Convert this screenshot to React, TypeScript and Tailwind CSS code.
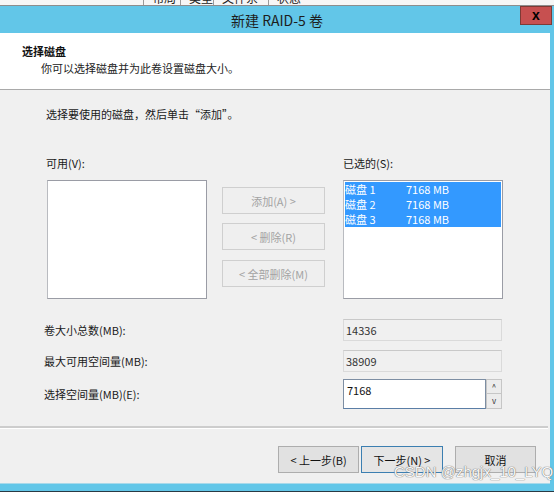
import React from 'react'

const font = "font-['Noto_Sans_CJK_SC','Noto_Sans',sans-serif]"

function ListBox({ children }: { children?: React.ReactNode }) {
  return (
    <div className="h-[119px] w-[160px] border border-[#9a9ca5] border-l-[#b9bbc0] bg-white p-px">
      {children}
    </div>
  )
}

function SideButton({ label }: { label: string }) {
  return (
    <div className="flex h-[27px] w-[103px] items-center justify-center border border-[#cfcfcf] bg-[#efefef] text-[11px] text-[#a3a3a3]">
      {label}
    </div>
  )
}

function ReadField({ value }: { value: string }) {
  return (
    <div className="flex h-[22px] w-[159px] items-center border border-[#dadada] border-t-[#c9c9c9] bg-[#f0f0f0] pl-[2px] text-[11px] text-[#333]">
      {value}
    </div>
  )
}

function FooterButton({
  label,
  focused,
}: {
  label: string
  focused?: boolean
}) {
  return (
    <div
      className={
        focused
          ? 'flex h-[27px] w-[82px] items-center justify-center border border-[#3c7fb1] bg-[#e5e5e5] text-[11px] text-[#111]'
          : 'flex h-[27px] w-[81px] items-center justify-center border border-[#adadad] bg-[#e1e1e1] text-[11px] text-[#111]'
      }
    >
      {label}
    </div>
  )
}

export default function App() {
  const disks = ['磁盘 1', '磁盘 2', '磁盘 3']

  return (
    <div
      className={`relative h-[492px] w-[554px] overflow-hidden bg-[#62c6e8] ${font}`}
    >
      {/* window behind: column headers cut off */}
      <div className="flex h-[6px] overflow-hidden border-b border-[#8d8d8d] bg-[#f6f6f6] text-[12px] leading-[14px] text-[#222]">
        <div className="w-[143px] shrink-0" />
        {[
          ['布局', 37],
          ['类型', 33],
          ['文件系统', 55],
          ['状态', 60],
        ].map(([t, w]) => (
          <div
            key={t as string}
            className="shrink-0 border-l border-[#9a9a9a] pl-[8px]"
            style={{ width: w as number }}
          >
            <div className="-mt-[9px]">{t}</div>
          </div>
        ))}
        <div className="w-[238px] shrink-0" />
        <div className="w-[33px] shrink-0 border-l border-[#9a9a9a] pl-[6px]">
          <div className="-mt-[9px]">容量</div>
        </div>
        <div className="w-[20px] shrink-0 border-l border-[#9a9a9a] pl-[4px]">
          <div className="-mt-[9px]">可</div>
        </div>
      </div>

      {/* title bar */}
      <div className="flex h-[27px] items-center justify-center text-[14px] leading-none text-[#1d1d1d]">
        新建 RAID-5 卷
      </div>
      <div className="absolute left-[520px] top-[6px] flex h-[19px] w-[32px] items-center justify-center border border-[#7f3a35] bg-[#c75050] pb-[2px] font-['Liberation_Sans',sans-serif] text-[14px] font-bold leading-none text-black">
        x
      </div>

      <div className="w-[550px]">
        {/* header */}
        <div className="h-[57px] border-b border-[#a9a9a9] bg-white pt-[10px] text-[11px] leading-[16px] text-[#111]">
          <div className="pl-[22px] font-bold">选择磁盘</div>
          <div className="mt-px pl-[41px] text-[#222]">
            你可以选择磁盘并为此卷设置磁盘大小。
          </div>
        </div>

        {/* body */}
        <div className="h-[393px] bg-[#f0f0f0] text-[11px] leading-[16px] text-[#1a1a1a]">
          <div className="pl-[46px] pt-[16px]">
            选择要使用的磁盘，然后单击“添加”。
          </div>

          <div className="mt-[33px] flex pl-[46px]">
            <div className="w-[297px]">可用(V):</div>
            <div>已选的(S):</div>
          </div>

          <div className="mt-[9px] flex pl-[47px]">
            <ListBox />
            <div className="ml-[15px] flex flex-col pt-[7px]">
              <SideButton label="添加(A) >" />
              <div className="mt-[9px]">
                <SideButton label="< 删除(R)" />
              </div>
              <div className="mt-[10px]">
                <SideButton label="< 全部删除(M)" />
              </div>
            </div>
            <div className="ml-[18px]">
              <ListBox>
                {disks.map((d) => (
                  <div
                    key={d}
                    className="flex h-[15px] items-center bg-[#3399ff] text-[11px] leading-none text-white"
                  >
                    <span className="w-[61px]">{d}</span>
                    <span>7168 MB</span>
                  </div>
                ))}
              </ListBox>
            </div>
          </div>

          {/* sizes */}
          <div className="mt-[20px] flex items-center pl-[44px]">
            <div className="w-[299px]">卷大小总数(MB):</div>
            <ReadField value="14336" />
          </div>
          <div className="mt-[9px] flex items-center pl-[44px]">
            <div className="w-[299px]">最大可用空间量(MB):</div>
            <ReadField value="38909" />
          </div>
          <div className="mt-[7px] flex items-center pl-[44px]">
            <div className="w-[299px]">选择空间量(MB)(E):</div>
            <div className="flex h-[30px]">
              <div className="w-[143px] border border-[#7d8ea3] border-b-[#5b7ea6] bg-white pl-[3px] pt-[2px] text-[11px] text-[#111]">
                7168
              </div>
              <div className="flex w-[16px] flex-col">
                <div className="flex h-[15px] items-center justify-center border border-[#c6c6c6] bg-[#ececec] text-[8px] leading-none text-[#333]">
                  ^
                </div>
                <div className="flex h-[15px] items-center justify-center border border-t-0 border-[#c6c6c6] bg-[#ececec] text-[8px] leading-none text-[#333]">
                  v
                </div>
              </div>
            </div>
          </div>

          {/* separator */}
          <div className="mr-[2px] mt-[17px] h-[3px] border-t-2 border-b border-t-[#cdcdcd] border-b-white" />

          {/* footer buttons */}
          <div className="mt-[17px] flex pl-[278px]">
            <FooterButton label="< 上一步(B)" />
            <div className="ml-[2px]">
              <FooterButton label="下一步(N) >" focused />
            </div>
            <div className="ml-[12px]">
              <FooterButton label="取消" />
            </div>
          </div>
        </div>
      </div>

      {/* bottom frame */}
      <div className="h-[1px] w-[550px] bg-[#a9d9ea]" />
      <div className="absolute bottom-0 left-0 h-px w-full bg-[#2a3a44]" />

      {/* watermark */}
      <div className="absolute left-[394px] top-[464px] font-['Liberation_Sans',sans-serif] text-[15px] leading-[16px] text-[#f7f7f7] [text-shadow:0_0_1px_#6e6e6e,0_0_1px_#6e6e6e]">
        CSDN @zhgjx_10_LYQ
      </div>
    </div>
  )
}
